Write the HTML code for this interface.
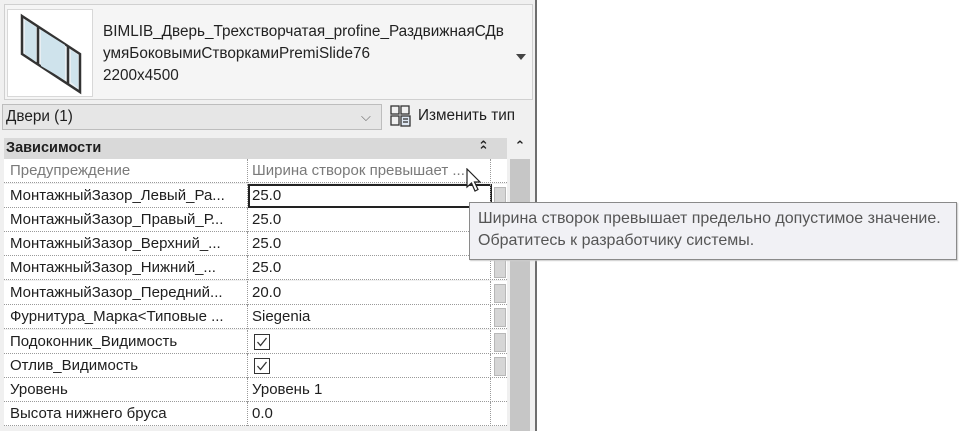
<!DOCTYPE html>
<html><head><meta charset="utf-8"><style>
*{margin:0;padding:0;box-sizing:border-box}
body{width:974px;height:431px;background:#fff;font-family:"Liberation Sans","DejaVu Sans",sans-serif;font-size:15px;color:#1e1e1e;position:relative;overflow:hidden}
.a{position:absolute}
.row{position:absolute;left:4px;width:503px;height:24px;border-bottom:1px dotted #9a9a9a;background:#fff}
.row .l{position:absolute;left:6px;top:3px;white-space:nowrap;width:238px;overflow:hidden}
.row .v{position:absolute;left:248px;top:3px;white-space:nowrap}
.row .sep{position:absolute;left:243px;top:0;height:24px;border-left:1px dotted #9a9a9a}
.row .sep2{position:absolute;left:486px;top:0;height:24px;border-left:1px dotted #9a9a9a}
.btn{position:absolute;left:490px;top:3px;width:12px;height:19px;background:#d6d6d6;border:1px solid #b8b8b8}
.cb{position:absolute;left:250px;top:4px;width:16px;height:16px;border:1px solid #333;background:#fff}
</style></head><body>
<div class="a" style="left:0;top:0;width:537px;height:431px;background:#f0f0f0;border-right:2px solid #6e6e6e"></div>
<div class="a" style="left:4px;top:4px;width:529px;height:96px;background:#f5f5f5;border:1px solid #d0d0d0"></div>
<div class="a" style="left:7px;top:9px;width:86px;height:88px;background:#fff;border:1px solid #d8d8d8">
<svg width="86" height="88" viewBox="0 0 86 88"><polygon points="14,6 72,44 72,82 14,44" fill="#e8eef2" stroke="#333" stroke-width="2.5"/><line x1="30" y1="17" x2="30" y2="55" stroke="#333" stroke-width="2.5"/><line x1="60" y1="36" x2="60" y2="74" stroke="#333" stroke-width="2.5"/><polygon points="17,10 28,17 28,52 17,44" fill="#cfe3ec"/><polygon points="33,20 57,35 57,70 33,56" fill="#cfe3ec"/><polygon points="63,40 70,45 70,78 63,72" fill="#cfe3ec"/></svg></div>
<div class="a" style="left:103px;top:21px;line-height:22px;font-size:15.3px;color:#222">BIMLIB_Дверь_Трехстворчатая_profine_РаздвижнаяСДв<br>умяБоковымиСтворкамиPremiSlide76<br>2200x4500</div>
<div class="a" style="left:516px;top:54px;width:0;height:0;border-left:5px solid transparent;border-right:5px solid transparent;border-top:6px solid #444"></div>
<div class="a" style="left:2px;top:104px;width:380px;height:26px;background:#e6e6e6;border:1px solid #bdbdbd"></div>
<div class="a" style="left:6px;top:108px;font-size:15.3px">Двери (1)</div>
<div class="a" style="left:361px;top:109px;color:#666;font-size:13px">⌵</div>
<svg class="a" style="left:390px;top:105px" width="22" height="22" viewBox="0 0 22 22" fill="none" stroke="#333" stroke-width="1.3"><rect x="1" y="1" width="8" height="8"/><rect x="11" y="1" width="8" height="8"/><rect x="1" y="11" width="8" height="9"/><rect x="11" y="11" width="9" height="10" fill="#dfe8f3"/><line x1="13" y1="14" x2="18" y2="14"/><line x1="13" y1="17" x2="18" y2="17"/></svg>
<div class="a" style="left:418px;top:107px;font-size:15.3px">Изменить тип</div>
<div class="a" style="left:4px;top:138px;width:503px;height:21px;background:#d9d9d9"></div>
<div class="a" style="left:6px;top:140px;font-weight:bold;font-size:14.5px">Зависимости</div>
<div class="a" style="left:478px;top:138px;font-size:13px;font-weight:bold">⌃</div>
<div class="a" style="left:478px;top:143px;font-size:13px;font-weight:bold">⌃</div>
<div class="a" style="left:510px;top:138px;width:20px;height:21px;background:#f0f0f0;text-align:center;font-size:13px;font-weight:bold">⌃</div>
<div class="a" style="left:510px;top:159px;width:20px;height:272px;background:#c6c6c6"></div>

<div class="row" style="top:159px"><div class="l" style="color:#7a7a7a">Предупреждение</div><div class="sep"></div><div class="v" style="color:#7a7a7a">Ширина створок превышает ...</div><div class="sep2"></div></div>
<div class="row" style="top:184px"><div class="l">МонтажныйЗазор_Левый_Ра...</div><div class="sep"></div><div class="a" style="left:244px;top:0;width:244px;height:24px;border:2px solid #222;background:#fff"></div><div class="v">25.0</div><div class="sep2"></div><div class="btn"></div></div>
<div class="row" style="top:208px"><div class="l">МонтажныйЗазор_Правый_Р...</div><div class="sep"></div><div class="v">25.0</div><div class="sep2"></div><div class="btn"></div></div>
<div class="row" style="top:232px"><div class="l">МонтажныйЗазор_Верхний_...</div><div class="sep"></div><div class="v">25.0</div><div class="sep2"></div><div class="btn"></div></div>
<div class="row" style="top:256px"><div class="l">МонтажныйЗазор_Нижний_...</div><div class="sep"></div><div class="v">25.0</div><div class="sep2"></div><div class="btn"></div></div>
<div class="row" style="top:281px"><div class="l">МонтажныйЗазор_Передний...</div><div class="sep"></div><div class="v">20.0</div><div class="sep2"></div><div class="btn"></div></div>
<div class="row" style="top:305px"><div class="l">Фурнитура_Марка&lt;Типовые ...</div><div class="sep"></div><div class="v">Siegenia</div><div class="sep2"></div><div class="btn"></div></div>
<div class="row" style="top:330px"><div class="l">Подоконник_Видимость</div><div class="sep"></div><div class="cb"><svg width="14" height="14" viewBox="0 0 14 14"><path d="M2.5 7 L5.5 10.5 L11.5 3" fill="none" stroke="#333" stroke-width="1.3"/></svg></div><div class="sep2"></div><div class="btn"></div></div>
<div class="row" style="top:354px"><div class="l">Отлив_Видимость</div><div class="sep"></div><div class="cb"><svg width="14" height="14" viewBox="0 0 14 14"><path d="M2.5 7 L5.5 10.5 L11.5 3" fill="none" stroke="#333" stroke-width="1.3"/></svg></div><div class="sep2"></div><div class="btn"></div></div>
<div class="row" style="top:378px"><div class="l">Уровень</div><div class="sep"></div><div class="v">Уровень 1</div><div class="sep2"></div></div>
<div class="row" style="top:402px"><div class="l">Высота нижнего бруса</div><div class="sep"></div><div class="v">0.0</div><div class="sep2"></div></div>

<div class="a" style="left:469px;top:202px;width:488px;height:58px;background:#f1f1f5;border:1px solid #8a8a8a;box-shadow:1px 1px 1px #ccc"></div>
<div class="a" style="left:478px;top:208px;line-height:22px;font-size:16px;color:#555;white-space:nowrap">Ширина створок превышает предельно допустимое значение.<br>Обратитесь к разработчику системы.</div>
<svg class="a" style="left:466px;top:168px" width="20" height="26" viewBox="0 0 20 26"><path d="M1 1 L1 19 L5.5 15 L9 23 L12 21.5 L8.5 14 L14 14 Z" fill="#fff" stroke="#222" stroke-width="1.2"/></svg>
</body></html>
